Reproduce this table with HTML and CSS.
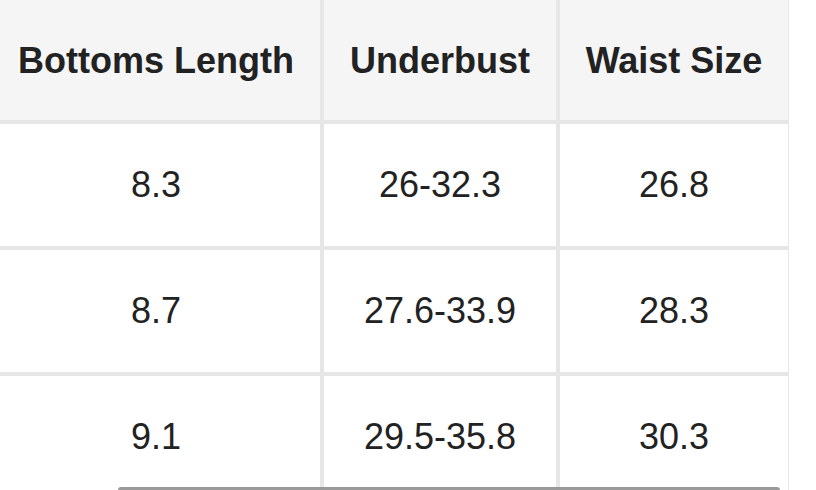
FILE: index.html
```html
<!DOCTYPE html>
<html>
<head>
<meta charset="utf-8">
<link rel="stylesheet" href="styles.css">
</head>
<body>
<div class="viewport">
  <div class="size-table">
    <div class="cell head">Bottoms Length</div>
    <div class="cell head">Underbust</div>
    <div class="cell head">Waist Size</div>
    <div class="cell">8.3</div>
    <div class="cell">26-32.3</div>
    <div class="cell">26.8</div>
    <div class="cell">8.7</div>
    <div class="cell">27.6-33.9</div>
    <div class="cell">28.3</div>
    <div class="cell">9.1</div>
    <div class="cell">29.5-35.8</div>
    <div class="cell">30.3</div>
  </div>
  <div class="scroll-thumb"></div>
</div>
</body>
</html>
```
FILE: styles.css
```css
html, body {
  margin: 0;
  padding: 0;
  background: #ffffff;
}
.viewport {
  position: relative;
  width: 816px;
  height: 490px;
  overflow: hidden;
  background: #ffffff;
}
.size-table {
  display: grid;
  grid-template-columns: 328px 232px 228px;
  grid-auto-rows: 122px;
  gap: 4px;
  width: 796px;
  margin-left: -8px;
  margin-top: -2px;
  background: #e6e6e6;
  border-right: 1px solid #e8e8e8;
  font-family: "Liberation Sans", Arial, Helvetica, sans-serif;
  color: #222222;
}
.cell {
  display: flex;
  align-items: center;
  justify-content: center;
  background: #ffffff;
  font-size: 36px;
  line-height: 1;
}
.cell.head {
  background: #f5f5f5;
  font-weight: bold;
  padding-top: 4px;
}
.scroll-thumb {
  position: absolute;
  left: 118px;
  top: 487px;
  width: 662px;
  height: 6px;
  border-radius: 3px;
  background: #9a9a9a;
}
```
